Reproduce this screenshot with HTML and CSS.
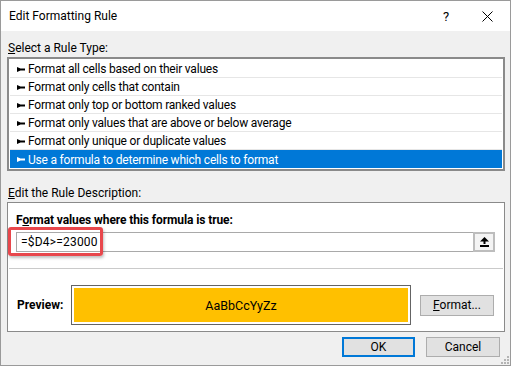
FILE: index.html
```html
<!DOCTYPE html>
<html>
<head>
  <meta charset="UTF-8">
  <link rel="stylesheet" href="styles.css">
</head>
<body>
  <div class="dialog">
    <div class="titlebar">
      <span class="title">Edit Formatting Rule</span>
      <span class="help">?</span>
      <span class="close">
        <svg width="11" height="11" viewBox="0 0 11 11"><path d="M0.5 0.5L10.5 10.5M10.5 0.5L0.5 10.5" stroke="#000" stroke-width="1"/></svg>
      </span>
    </div>

    <div class="content">
      <div class="label"><u>S</u>elect a Rule Type:</div>
      <ul class="rule-list">
        <li><svg class="bullet" viewBox="0 0 8 5"><polygon points="0,0 3.5,1.5 8,1.5 8,3.5 3.5,3.5 0,5"/></svg>Format all cells based on their values</li>
        <li><svg class="bullet" viewBox="0 0 8 5"><polygon points="0,0 3.5,1.5 8,1.5 8,3.5 3.5,3.5 0,5"/></svg>Format only cells that contain</li>
        <li><svg class="bullet" viewBox="0 0 8 5"><polygon points="0,0 3.5,1.5 8,1.5 8,3.5 3.5,3.5 0,5"/></svg>Format only top or bottom ranked values</li>
        <li><svg class="bullet" viewBox="0 0 8 5"><polygon points="0,0 3.5,1.5 8,1.5 8,3.5 3.5,3.5 0,5"/></svg>Format only values that are above or below average</li>
        <li><svg class="bullet" viewBox="0 0 8 5"><polygon points="0,0 3.5,1.5 8,1.5 8,3.5 3.5,3.5 0,5"/></svg>Format only unique or duplicate values</li>
        <li class="selected"><svg class="bullet" viewBox="0 0 8 5"><polygon points="0,0 3.5,1.5 8,1.5 8,3.5 3.5,3.5 0,5"/></svg>Use a formula to determine which cells to format</li>
      </ul>

      <div class="label label-desc"><u>E</u>dit the Rule Description:</div>
      <div class="desc">
        <div class="desc-title">F<u>o</u>rmat values where this formula is true:</div>
        <div class="formula-row">
          <div class="formula-input">=$D4&gt;=23000</div>
          <button class="ref-btn">
            <svg width="9" height="10" viewBox="0 0 9 10"><polygon points="4.5,0 9,4.5 0,4.5"/><rect x="3.5" y="4" width="2" height="3"/><rect x="0" y="8" width="9" height="2"/></svg>
          </button>
        </div>
        <div class="sep"></div>
        <div class="preview-row">
          <span class="preview-label">Preview:</span>
          <div class="preview-box"><div class="preview-fill">AaBbCcYyZz</div></div>
          <button class="btn btn-format"><u>F</u>ormat...</button>
        </div>
      </div>

      <div class="actions">
        <button class="btn btn-ok">OK</button>
        <button class="btn">Cancel</button>
      </div>
    </div>

    <div class="highlight"></div>
    <svg class="grip" width="8" height="8" viewBox="0 0 8 8">
      <rect x="6" y="0" width="2" height="2"/><rect x="3" y="3" width="2" height="2"/><rect x="6" y="3" width="2" height="2"/>
      <rect x="0" y="6" width="2" height="2"/><rect x="3" y="6" width="2" height="2"/><rect x="6" y="6" width="2" height="2"/>
    </svg>
  </div>
</body>
</html>
```

FILE: styles.css
```css
body {
  margin: 0;
  background: #ffffff;
  font-family: Roboto, 'Noto Sans', sans-serif;
  font-size: 12px;
  color: #000;
}

.dialog {
  position: relative;
  width: 511px;
  height: 366px;
  box-sizing: border-box;
  border: 1px solid #9a9a9a;
  background: #f0f0f0;
  display: flex;
  flex-direction: column;
}

.titlebar {
  height: 30px;
  background: #ffffff;
  display: flex;
  align-items: center;
}

.title {
  flex: 1;
  padding-left: 8px;
  font-size: 12px;
  line-height: 30px;
}

.help {
  width: 36px;
  text-align: center;
  font-size: 13px;
}

.close {
  width: 46px;
  display: flex;
  justify-content: center;
  align-items: center;
}

.content {
  padding: 0 5px 0 6px;
}

.label {
  margin-top: 10px;
  padding-left: 1px;
  line-height: 15px;
}

.label-desc {
  margin-top: 15px;
}

.rule-list {
  list-style: none;
  margin: 1px 0 0;
  padding: 1px;
  border: 2px solid #8a8a8a;
  background: #ffffff;
}

.rule-list li {
  height: 16px;
  padding-top: 1px;
  line-height: 16px;
  border-bottom: 1px solid #e6e6e6;
  display: flex;
  align-items: center;
  white-space: nowrap;
  letter-spacing: -0.2px;
}

.rule-list li.selected {
  height: 17px;
  border-bottom: none;
  background: #0078d7;
  color: #ffffff;
}

.bullet {
  width: 8px;
  height: 5px;
  margin: 0 3px 0 7px;
  fill: #000;
}

.selected .bullet {
  fill: #ffffff;
}

.desc {
  margin-top: 1px;
  border: 1px solid #8a8a8a;
  background: #ffffff;
  padding: 9px 0 6px;
}

.desc-title {
  padding-left: 8px;
  line-height: 16px;
  font-weight: 700;
  letter-spacing: -0.1px;
}

.formula-row {
  display: flex;
  margin: 4px 9px 0 8px;
  height: 20px;
}

.formula-input {
  flex: 1;
  border: 1px solid #a9a9a9;
  border-right: none;
  padding-left: 4px;
  line-height: 18px;
  letter-spacing: 0.2px;
}

.ref-btn {
  width: 22px;
  height: 20px;
  box-sizing: border-box;
  border: 2px solid #bdbdbd;
  background: #f4f4f4;
  padding: 0;
  display: flex;
  align-items: center;
  justify-content: center;
}

.sep {
  margin: 16px 1px 0;
  height: 1px;
  background: #cacaca;
}

.preview-row {
  display: flex;
  align-items: center;
  margin-top: 16px;
  padding-left: 8px;
}

.preview-label {
  width: 55px;
  font-weight: 700;
  padding-left: 1px;
  box-sizing: border-box;
}

.preview-box {
  width: 340px;
  height: 40px;
  box-sizing: border-box;
  border: 1px solid #646464;
  padding: 2px;
  background: #ffffff;
}

.preview-fill {
  height: 100%;
  background: #ffc000;
  display: flex;
  align-items: center;
  justify-content: center;
  font-size: 12.5px;
}

.btn {
  font-family: inherit;
  font-size: 12px;
  color: #000;
  background: #e1e1e1;
  border: 1px solid #adadad;
  padding: 0;
  width: 74px;
  height: 20px;
  line-height: 16px;
}

.btn-format {
  margin-left: 9px;
  height: 21px;
}

.actions {
  display: flex;
  justify-content: flex-end;
  gap: 11px;
  margin-top: 5px;
  padding-right: 5px;
}

.btn-ok {
  width: 73px;
  border: 2px solid #0078d7;
}

.highlight {
  position: absolute;
  left: 7px;
  top: 226px;
  width: 95px;
  height: 29px;
  box-sizing: border-box;
  border: 3px solid #e8474c;
  border-radius: 3px;
  box-shadow: 1px 2px 3px rgba(0, 0, 0, 0.25);
}

.grip {
  position: absolute;
  right: 1px;
  bottom: 1px;
  fill: #b4b4b4;
}
```
